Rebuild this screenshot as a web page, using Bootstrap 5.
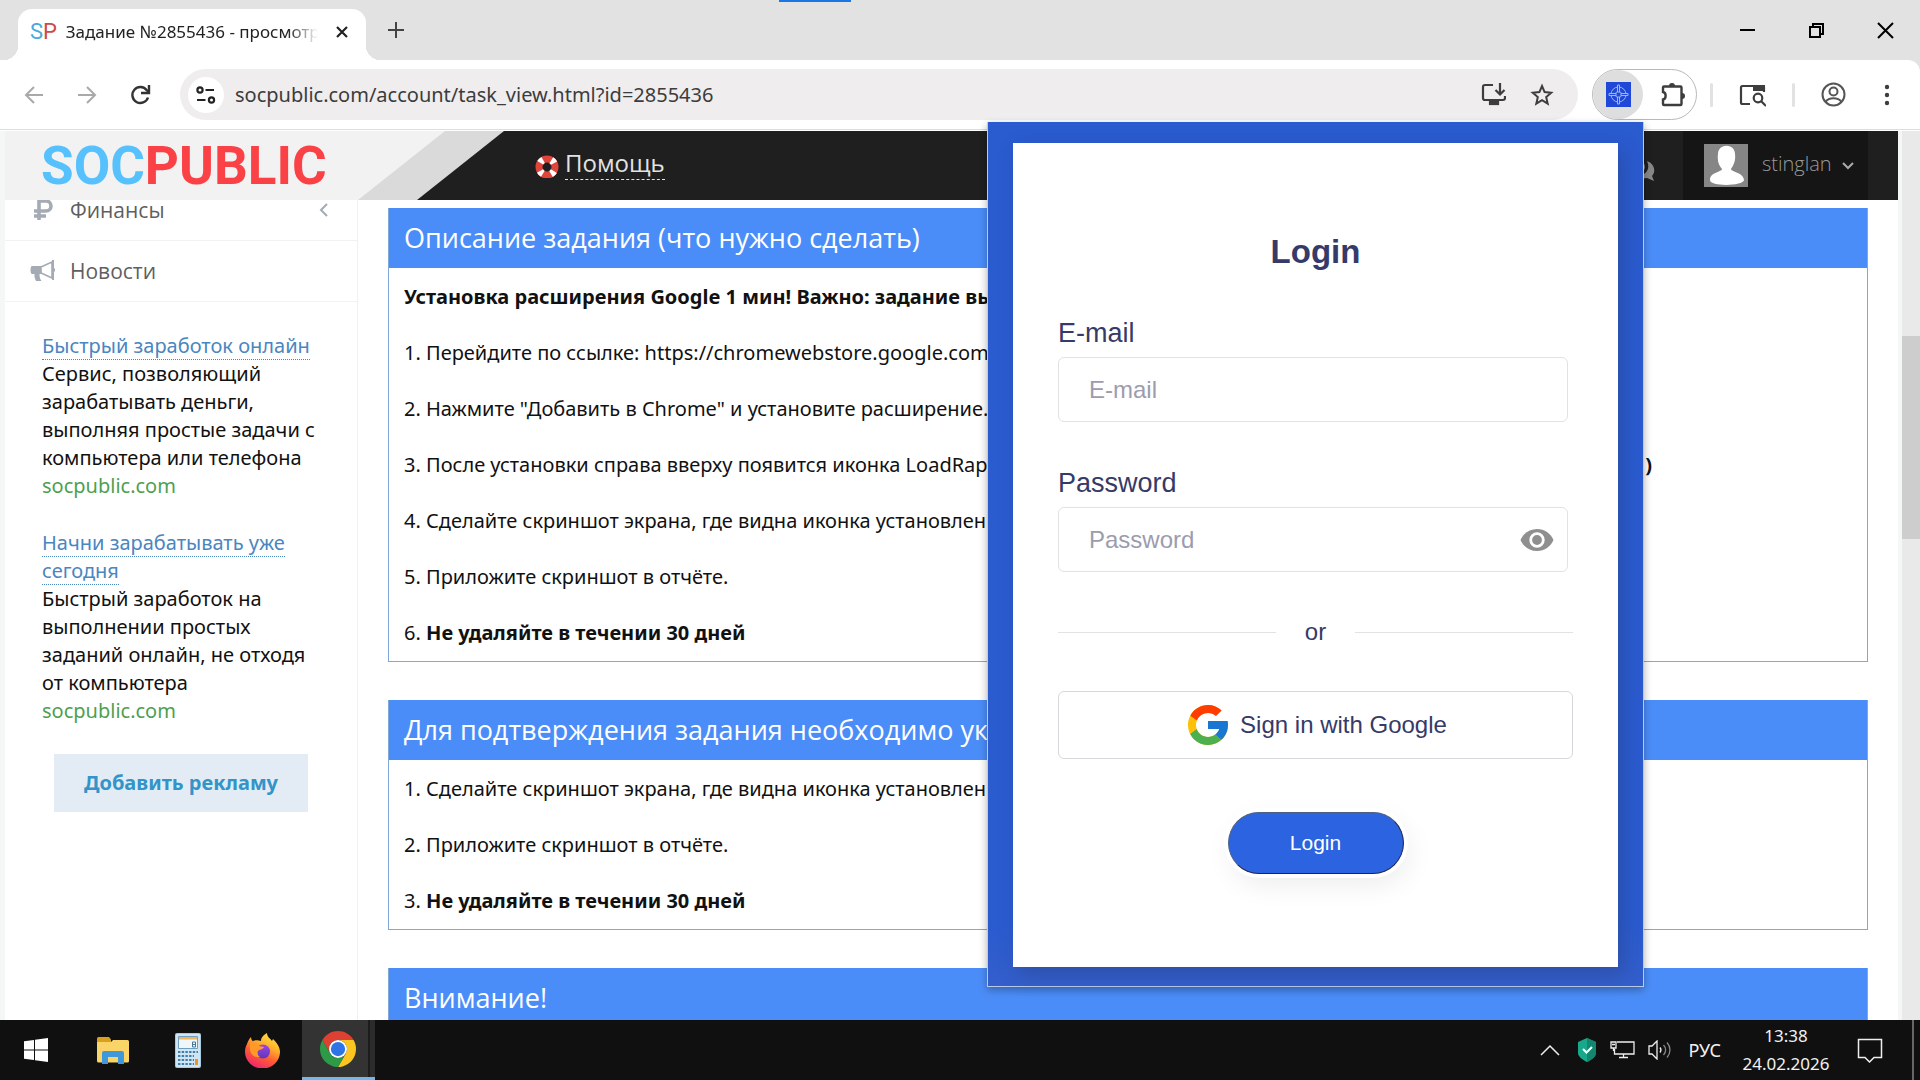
<!DOCTYPE html>
<html lang="ru">
<head>
<meta charset="utf-8">
<meta name="viewport" content="width=device-width, initial-scale=1">
<title>Задание №2855436 - просмотр</title>
<link href="https://cdn.jsdelivr.net/npm/bootstrap@5.3.0/dist/css/bootstrap.min.css" rel="stylesheet">
<style>
  body { font-family: "Open Sans", "Noto Sans", sans-serif; font-size: 20px; line-height: 28px; color: #111; background: #fff; }
  svg { display: block; flex: none; }
  .btn { --bs-btn-border-width: 0; --bs-btn-padding-x: 0; --bs-btn-padding-y: 0; --bs-btn-border-radius: 0; flex: none; }

  /* Browser window */
  .tabstrip { height: 60px; background: #e2e2e2; }
  .load-line { top: 0; left: 779px; width: 72px; height: 2px; background: #1877e0; }
  .browser-tab { width: 348px; height: 51px; margin-left: 18px; padding: 0 16px 6px 12px; background: #fff; border-radius: 14px 14px 0 0; }
  .browser-tab::before, .browser-tab::after { content: ""; position: absolute; bottom: 0; width: 14px; height: 14px; }
  .browser-tab::before { left: -14px; background: radial-gradient(circle at 0 0, #e2e2e2 14px, #fff 14px); }
  .browser-tab::after { right: -14px; background: radial-gradient(circle at 100% 0, #e2e2e2 14px, #fff 14px); }
  .fav { font: 400 22px/30px Roboto, sans-serif; color: #4aa8e0; width: 36px; }
  .fav span { color: #d04848; }
  .tab-title { font: 17px/24px "Noto Sans", sans-serif; color: #222; -webkit-mask-image: linear-gradient(90deg, #000 88%, transparent); mask-image: linear-gradient(90deg, #000 88%, transparent); }
  .window-buttons { gap: 52px; padding-right: 26px; }
  .new-tab { margin-left: 21px; }
  .toolbar { height: 70px; padding: 0 24px; border-bottom: 1px solid #ddd; background: #fff; border-top-right-radius: 12px; }
  .toolbar-wrap { background: #e2e2e2; }
  .nav-buttons { gap: 33px; margin-right: 28px; }
  .omnibox { height: 51px; border-radius: 26px; background: #efeded; padding: 0 24px 0 8px; gap: 24px; margin-right: 14px; }
  .site-info { width: 36px; height: 36px; border-radius: 50%; background: #fff; }
  .omnibox input { font: 20px/28px "Noto Sans", sans-serif; color: #3c3c3c; margin-left: -13px; }
  .ext-pill { width: 105px; height: 51px; border: 1px solid #b9b9b9; border-radius: 26px; padding-right: 10px; }
  .ext-active { width: 50px; height: 49px; border-radius: 50%; background: #dedede; }
  .tool-sep { width: 3px; height: 24px; background: #e2e2e2; border-radius: 2px; }
  .tool-right { gap: 26px; padding-left: 13px; }
  .menu-btn { margin-left: 6px; }

  /* Site */
  .viewport-area { min-height: 0; background: #f5f6f6; padding-left: 5px; margin-top: 1px; }
  .site-header { height: 69px; background: #1f1f1f; }
  .logo-zone { width: 499px; background: #f2f2f2; }
  .logo-text { left: 36px; top: 0; font: 700 53px/70px Roboto, sans-serif; color: #57c1fd; text-decoration: none; }
  .logo-text span { color: #fa4145; }
  .help-link { margin-left: 31px; gap: 6px; padding-bottom: 4px; color: #e2e2e2; font-size: 24px; line-height: 32px; text-decoration: none; }
  .help-link svg { margin-top: 4px; }
  .help-link span { border-bottom: 1px dashed #e2e2e2; }
  .chat-icon { margin: 8px 26px 0 auto; }
  .user-box { width: 185px; background: #151515; margin-right: 30px; padding-left: 21px; color: #999; }
  .user-name { font-size: 20px; line-height: 28px; font-weight: 300; padding: 0 10px 3px 14px; }
  .sidebar { width: 353px; background: #fff; border-right: 1px solid #eff1f2; }
  .side-row { height: 61px; border-bottom: 1px solid #f0f2f3; padding: 0 28px 0 25px; color: #5f5f5f; font-size: 21px; text-decoration: none; }
  .side-row:first-child { margin-top: -20px; }
  .side-row .side-icon { width: 40px; }
  .promo-list { padding: 30px 30px 0 37px; font-family: "Noto Sans", sans-serif; }
  .promo-list a { color: #4a86c0; text-decoration: none; border-bottom: 1px dotted #4a86c0; }
  .promo-list .domain { color: #4f9f50; }
  .second-promo { margin-top: 29px; }
  .ad-button { width: 254px; height: 58px; margin: 29px 0 0 12px; background: #e3ebf4; color: #3294c8; font-size: 20px; font-weight: 700; }
  .task-col { background: #fff; padding: 8px 30px 0 30px; }
  .task-panel { border: 1px solid #80a9d8; border-top: 0; margin-bottom: 38px; }
  .task-title { height: 60px; background: #4b8df8; color: #fff; padding: 0 15px; font-size: 27px; line-height: 60px; font-weight: 400; margin: 0; }
  .task-body { padding: 15px 15px 14px; font-family: "Noto Sans", sans-serif; white-space: nowrap; }
  .task-body p { margin-bottom: 28px; }
  .task-body p:last-child { margin-bottom: 0; }
  .tail { margin-right: 200px; }
  .scroll-track { width: 18px; margin-left: 4px; background: #e9e9e9; padding-top: 205px; }
  .scroll-thumb { height: 203px; background: #cdcdcd; }

  /* Extension popup */
  .popup { top: 122px; right: 276px; width: 657px; border: 1px solid #b9cbe9; border-top: 0; background: linear-gradient(#2a5bcf 93%, #345fcb); padding: 21px 25px 19px; box-shadow: 0 3px 8px rgba(0,0,0,.3); font-family: "Liberation Sans", Arial, sans-serif; color: #363a68; z-index: 5; }
  .login-card { background: #fff; padding: 90px 45px 93px; box-shadow: 6px 8px 18px rgba(40,60,120,.4); }
  .login-card h1 { font-size: 33px; line-height: 38px; font-weight: 700; margin: 0 0 47px; }
  .login-card label { font-size: 27px; line-height: 30px; margin-bottom: 9px; }
  .login-card .form-control { width: 510px; height: 65px; border: 1px solid #e2e2e4; border-radius: 6px; padding: 0 30px; font-size: 24px; color: #363a68; background: #fff; }
  .login-card .form-control::placeholder { color: #9c9cae; opacity: 1; }
  .login-field { margin-bottom: 46px; }
  .eye { right: 19px; bottom: 15px; }
  .or-row { gap: 29px; font-size: 24px; line-height: 28px; }
  .or-row hr { border-color: #e2e2e5; opacity: 1; margin: 0; }
  .google-btn { height: 68px; border: 1px solid #d8d8dc; border-radius: 6px; font-size: 24px; color: #363a68; margin-top: 45px; gap: 8px; }
  .login-btn { width: 176px; height: 62px; margin: 53px auto 0; border: 1px solid; border-color: #51607f #1b2547 #1b2547 #51607f; border-radius: 31px; background: #2b63e0; color: #fff; font-size: 21px; box-shadow: 0 0 0 4px #fff, 4px 10px 28px rgba(0,0,0,.08); }

  /* Windows taskbar */
  .taskbar { height: 60px; background: #101010; color: #f2f2f2; font: 18px/28px "Noto Sans", sans-serif; }
  .task-slot { width: 75px; height: 60px; color: #fff; }
  .task-active { width: 73px; margin-left: 2px; background: linear-gradient(90deg, #333 66px, #1c1c1c 66px, #1c1c1c 68px, #2b2b2b 68px); border-bottom: 3px solid #76b5e8; padding-right: 2px; }
  .tray { gap: 13px; }
  .clock { width: 90px; margin: 0 13px 0 3px; font-size: 17px; white-space: nowrap; }
  .show-desktop { width: 8px; height: 60px; border-left: 2px solid #666; margin-left: 16px; }
</style>
<script src="https://cdn.jsdelivr.net/npm/bootstrap@5.3.0/dist/js/bootstrap.bundle.min.js"></script>
</head>
<body class="d-flex flex-column vh-100 overflow-hidden position-relative">

<header>
  <div class="tabstrip d-flex align-items-end position-relative">
    <div class="load-line position-absolute"></div>
    <div class="browser-tab position-relative d-flex align-items-center">
      <div class="fav">S<span>P</span></div>
      <div class="tab-title flex-grow-1 text-nowrap overflow-hidden">Задание №2855436 - просмотр</div>
      <button class="btn ms-3" aria-label="Закрыть вкладку"><svg width="16" height="16" viewBox="0 0 16 16"><path d="M3 3l10 10M13 3L3 13" stroke="#222" stroke-width="2.200"/></svg></button>
    </div>
    <button class="btn new-tab align-self-center" aria-label="Новая вкладка"><svg width="18" height="18" viewBox="0 0 18 18"><path d="M1 9h16M9 1v16" stroke="#444" stroke-width="2"/></svg></button>
    <div class="window-buttons d-flex align-items-center align-self-center ms-auto">
      <button class="btn" aria-label="Свернуть"><svg width="17" height="17" viewBox="0 0 17 17"><path d="M1 8h15" stroke="#000" stroke-width="2"/></svg></button>
      <button class="btn" aria-label="Развернуть"><svg width="17" height="17" viewBox="0 0 17 17" fill="none" stroke="#000" stroke-width="2"><path d="M2 5h10v10H2zM5 5V2h10v10h-3"/></svg></button>
      <button class="btn" aria-label="Закрыть"><svg width="17" height="17" viewBox="0 0 17 17"><path d="M1 1l15 15M16 1L1 16" stroke="#000" stroke-width="2"/></svg></button>
    </div>
  </div>
  <div class="toolbar-wrap">
  <div class="toolbar d-flex align-items-center">
    <div class="nav-buttons d-flex align-items-center">
      <button class="btn" aria-label="Назад"><svg width="20" height="20" viewBox="0 0 20 20" fill="none" stroke="#a9a9a9" stroke-width="2"><path d="M19 10H2M10 2l-8 8 8 8"/></svg></button>
      <button class="btn" aria-label="Вперёд"><svg width="20" height="20" viewBox="0 0 20 20" fill="none" stroke="#a9a9a9" stroke-width="2"><path d="M1 10h17M10 2l8 8-8 8"/></svg></button>
      <button class="btn" aria-label="Обновить"><svg width="22" height="20" viewBox="0 0 22 20" fill="none" stroke="#333" stroke-width="2.400"><path d="M18 12.500a8 8 0 1 1-1.200-7.300L18.500 7"/><path d="M19 0v8h-8" /></svg></button>
    </div>
    <div class="omnibox d-flex align-items-center flex-grow-1">
      <button class="btn site-info d-flex align-items-center justify-content-center" aria-label="Сведения о сайте"><svg width="20" height="18" viewBox="0 0 20 18" fill="none" stroke="#222" stroke-width="2.200"><circle cx="4" cy="4" r="2.600"/><path d="M9.500 4H18M1 14h8.500"/><circle cx="15.500" cy="14" r="2.600"/></svg></button>
      <input class="form-control border-0 bg-transparent p-0 shadow-none flex-grow-1" type="text" aria-label="Адрес" value="socpublic.com/account/task_view.html?id=2855436">
      <button class="btn" aria-label="Установить приложение"><svg width="25" height="23" viewBox="0 0 25 23" fill="none" stroke="#3d3d3d" stroke-width="2.200"><path d="M12 2H4a2 2 0 0 0-2 2v11a2 2 0 0 0 2 2h18a2 2 0 0 0 2-2v-2"/><path d="M19 0v11M14.500 7l4.500 4.500L23.500 7"/><path d="M9 19h8v2H9z" fill="#3d3d3d"/></svg></button>
      <button class="btn" aria-label="Добавить в закладки"><svg width="24" height="24" viewBox="0 0 24 24" fill="none" stroke="#3d3d3d" stroke-width="2"><path d="M12 3l2.600 6.100 6.600.600-5 4.400 1.500 6.500L12 17.200l-5.700 3.400 1.500-6.500-5-4.400 6.600-.600z"/></svg></button>
    </div>
    <div class="ext-pill d-flex align-items-center justify-content-between">
      <button class="btn ext-active d-flex align-items-center justify-content-center" aria-label="LoadRaptor"><svg width="25" height="25" viewBox="0 0 25 25"><path fill="#1f47d8" d="M0 0h25v25H0z"/><g fill="none" stroke="#9db6f5" stroke-width="1"><circle cx="12.500" cy="12.500" r="7.500"/><circle cx="12.500" cy="12.500" r="3"/><path fill="#1f47d8" d="M11.500 3h2v7h-2zM11.500 15h2v7h-2zM3 11.500h7v2H3zM15 11.500h7v2h-7z"/></g></svg></button>
      <button class="btn" aria-label="Расширения"><svg width="26" height="26" viewBox="0 0 26 26"><path d="M3 5.500a1 1 0 0 1 1-1h16.500a1 1 0 0 1 1 1V22a1 1 0 0 1-1 1H4a1 1 0 0 1-1-1v-4.500c3.500-.500 3.500-7 0-7.500z" fill="none" stroke="#3d3d3d" stroke-width="2.400"/><path d="M9 4a3 3 0 0 1 6 0zM22 11a3 3 0 0 1 0 6z" fill="#3d3d3d"/></svg></button>
    </div>
    <div class="tool-right d-flex align-items-center">
      <span class="tool-sep"></span>
      <button class="btn" aria-label="Поиск по вкладкам"><svg width="27" height="24" viewBox="0 0 27 24" fill="none" stroke="#3d3d3d" stroke-width="2.200"><path d="M11 21H3.500A1.500 1.500 0 0 1 2 19.500v-15A1.500 1.500 0 0 1 3.500 3h20A1.500 1.500 0 0 1 25 4.500V9"/><path d="M14 2h12v6H14z" fill="#3d3d3d" stroke="none"/><circle cx="19" cy="15" r="4.300"/><path d="M22 18l5 5"/></svg></button>
      <span class="tool-sep"></span>
      <button class="btn" aria-label="Профиль"><svg width="25" height="25" viewBox="0 0 25 25" fill="none" stroke="#555" stroke-width="2"><circle cx="12.500" cy="12.500" r="11"/><circle cx="12.500" cy="9.500" r="4"/><path d="M4.500 20c3.500-5 12.500-5 16 0"/></svg></button>
      <button class="btn menu-btn" aria-label="Меню"><svg width="18" height="22" viewBox="0 0 18 22" fill="#3d3d3d"><circle cx="9" cy="3" r="2.200"/><circle cx="9" cy="11" r="2.200"/><circle cx="9" cy="19" r="2.200"/></svg></button>
    </div>
  </div>
  </div>
</header>

<div class="viewport-area d-flex flex-grow-1">
  <div class="d-flex flex-column flex-grow-1 overflow-hidden">
    <div class="site-header d-flex align-items-stretch flex-shrink-0">
      <div class="logo-zone position-relative">
        <svg class="w-100 h-100" viewBox="0 0 499 69" preserveAspectRatio="none"><path fill="#dadada" d="M440 0h59v69H353z"/><path fill="#1f1f1f" d="M499 0v69h-87z"/></svg>
        <a class="logo-text position-absolute" href="#">SOC<span>PUBLIC</span></a>
      </div>
      <a class="help-link d-flex align-items-center" href="#"><svg width="24" height="24" viewBox="0 0 24 24" fill="none" stroke-width="7"><circle cx="12" cy="13" r="8" stroke="#e0443b"/><circle cx="12" cy="13" r="8" stroke="#fff" stroke-dasharray="4 8.566" stroke-dashoffset="-4.283"/></svg><span>Помощь</span></a>
      <svg class="chat-icon align-self-center" width="34" height="24" viewBox="0 0 34 24" fill="#888"><ellipse cx="11" cy="9" rx="11" ry="8"/><path d="M24 3c8 3 9 11 5 15l2 5-7-3c-5 1-9 0-11-2 9 0 15-6 11-15z"/></svg>
      <button class="btn user-box d-flex align-items-center" type="button">
        <svg width="44" height="43" viewBox="0 0 44 43"><path fill="#868686" d="M0 0h44v43H0z"/><path fill="#fff" d="M14 10c0-11 17-11 17 0 1 7-2 12-4 15 0 3 12 3 13 11 0 6-34 7-34 0 0-8 12-8 12-11-3-3-5-8-4-15z"/></svg>
        <span class="user-name">stinglan</span>
        <svg width="12" height="12" viewBox="0 0 12 12" fill="none" stroke="#aaa" stroke-width="2"><path d="M1 3l5 5 5-5"/></svg>
      </button>
    </div>

    <div class="d-flex flex-grow-1 overflow-hidden">
      <aside class="sidebar flex-shrink-0 overflow-hidden">
        <a class="side-row d-flex align-items-center" href="#">
          <span class="side-icon ps-1"><svg width="20" height="24" viewBox="0 0 20 24" fill="none" stroke="#a5abb4" stroke-width="3.600"><path d="M5 22V3h7a4.500 4.500 0 0 1 0 10H0M0 18h12"/></svg></span>
          <span class="flex-grow-1">Финансы</span>
          <svg width="10" height="14" viewBox="0 0 10 14" fill="none" stroke="#a5abb4" stroke-width="2"><path d="M8 1L2 7l6 6"/></svg>
        </a>
        <a class="side-row d-flex align-items-center" href="#">
          <span class="side-icon"><svg width="25" height="22" viewBox="0 0 25 22" fill="#a5abb4"><path d="M2 6h9v8H9.500c0 3 .500 5 2 7H6C5 19 4 16 4.500 14H2C0 14 0 6 2 6z"/><path d="M11 7l11-5v16l-11-5z" fill="none" stroke="#a5abb4" stroke-width="1.600"/><path d="M22 0h2v20h-2zM24 8c1.500 1 1.500 3 0 4z"/></svg></span>
          <span>Новости</span>
        </a>
        <div class="promo-list">
          <div><a href="#">Быстрый заработок онлайн</a></div>
          <div>Сервис, позволяющий<br>зарабатывать деньги,<br>выполняя простые задачи с<br>компьютера или телефона</div>
          <div class="domain">socpublic.com</div>
          <div class="second-promo"><a href="#">Начни зарабатывать уже<br>сегодня</a></div>
          <div>Быстрый заработок на<br>выполнении простых<br>заданий онлайн, не отходя<br>от компьютера</div>
          <div class="domain">socpublic.com</div>
          <button class="btn ad-button" type="button">Добавить рекламу</button>
        </div>
      </aside>

      <main class="task-col flex-grow-1 overflow-hidden">
        <section class="task-panel">
          <h2 class="task-title">Описание задания (что нужно сделать)</h2>
          <div class="task-body">
            <p><b>Установка расширения Google 1 мин! Важно: задание выполнять</b></p>
            <p>1. Перейдите по ссылке: https://chromewebstore.google.com/detail</p>
            <p>2. Нажмите "Добавить в Chrome" и установите расширение.</p>
            <p class="d-flex justify-content-between"><span>3. После установки справа вверху появится иконка LoadRaptor</span><b class="tail">)</b></p>
            <p>4. Сделайте скриншот экрана, где видна иконка установленного</p>
            <p>5. Приложите скриншот в отчёте.</p>
            <p>6. <b>Не удаляйте в течении 30 дней</b></p>
          </div>
        </section>
        <section class="task-panel">
          <h2 class="task-title">Для подтверждения задания необходимо указать</h2>
          <div class="task-body">
            <p>1. Сделайте скриншот экрана, где видна иконка установленного</p>
            <p>2. Приложите скриншот в отчёте.</p>
            <p>3. <b>Не удаляйте в течении 30 дней</b></p>
          </div>
        </section>
        <section class="task-panel">
          <h2 class="task-title">Внимание!</h2>
        </section>
      </main>
    </div>
  </div>
  <div class="scroll-track flex-shrink-0"><div class="scroll-thumb"></div></div>
</div>

<div class="popup position-absolute">
  <form class="login-card">
    <h1 class="text-center">Login</h1>
    <div class="login-field">
      <label class="d-block" for="email">E-mail</label>
      <input class="form-control" id="email" type="email" placeholder="E-mail">
    </div>
    <div class="login-field position-relative">
      <label class="d-block" for="password">Password</label>
      <input class="form-control" id="password" type="password" placeholder="Password">
      <button class="btn eye position-absolute" type="button" aria-label="Показать пароль"><svg width="34" height="34" viewBox="0 0 34 34"><path fill="#8f8f8f" d="M17 6C9.500 6 3.200 10.500.500 17c2.700 6.500 9 11 16.500 11s13.800-4.500 16.500-11C30.800 10.500 24.500 6 17 6z"/><circle cx="17" cy="17" r="6.300" fill="#8f8f8f" stroke="#fff" stroke-width="2.800"/></svg></button>
    </div>
    <div class="or-row d-flex align-items-center"><hr class="flex-grow-1"><span>or</span><hr class="flex-grow-1"></div>
    <button class="btn google-btn w-100 d-flex align-items-center justify-content-center" type="button">
      <svg width="48" height="48" viewBox="0 0 48 48"><path fill="#FFC107" d="M43.611 20.083H42V20H24v8h11.303c-1.649 4.657-6.080 8-11.303 8-6.627 0-12-5.373-12-12s5.373-12 12-12c3.059 0 5.842 1.154 7.961 3.039l5.657-5.657C34.046 6.053 29.268 4 24 4 12.955 4 4 12.955 4 24s8.955 20 20 20 20-8.955 20-20c0-1.341-.138-2.650-.389-3.917z"/><path fill="#FF3D00" d="M6.306 14.691l6.571 4.819C14.655 15.108 18.961 12 24 12c3.059 0 5.842 1.154 7.961 3.039l5.657-5.657C34.046 6.053 29.268 4 24 4 16.318 4 9.656 8.337 6.306 14.691z"/><path fill="#4CAF50" d="M24 44c5.166 0 9.860-1.977 13.409-5.192l-6.190-5.238C29.211 35.091 26.715 36 24 36c-5.202 0-9.619-3.317-11.283-7.946l-6.522 5.025C9.505 39.556 16.227 44 24 44z"/><path fill="#1976D2" d="M43.611 20.083H42V20H24v8h11.303c-.792 2.237-2.231 4.166-4.087 5.571l6.193 5.237C36.971 39.205 44 34 44 24c0-1.341-.138-2.650-.389-3.917z"/></svg>
      <span>Sign in with Google</span>
    </button>
    <button class="btn login-btn d-block" type="submit">Login</button>
  </form>
</div>

<footer class="taskbar d-flex align-items-center flex-shrink-0">
  <button class="btn task-slot d-flex align-items-center justify-content-center pe-1" aria-label="Пуск"><svg width="24" height="24" viewBox="0 0 24 24" fill="#fff"><path d="M0 3.300L10 2v9.400H0zM11 1.800L24 0v11.400H11zM0 12.600h10V22L0 20.700zM11 12.600h13V24l-13-1.800z"/></svg></button>
  <button class="btn task-slot d-flex align-items-center justify-content-center" aria-label="Проводник"><svg width="32" height="27" viewBox="0 0 32 27"><path fill="#d8a01c" d="M0 1.500Q0 0 1.500 0H12l2 2.500V6H0z"/><path fill="#fbd468" d="M0 5h14l2-2h14.500Q32 3 32 4.500V24q0 1.500-1.500 1.500h-29Q0 25.500 0 24z"/><path fill="#3e98d9" d="M5 27V16q0-2 2-2h18q2 0 2 2v11h-6v-7H11v7z"/></svg></button>
  <button class="btn task-slot d-flex align-items-center justify-content-center" aria-label="Калькулятор"><svg width="26" height="35" viewBox="0 0 26 35"><rect width="26" height="35" rx="2" fill="#a9cbe0"/><rect x="1" y="1" width="24" height="33" rx="1" fill="#cfe5f2"/><path fill="#f0f7fb" stroke="#6f9fc0" d="M3.500 3.500h19v12h-19z"/><path fill="#f0b45c" d="M4 4h18v2.500H4z"/><path d="M17.500 9h3v5h-3zM17.500 11.500h3" fill="none" stroke="#47769a"/><path stroke="#3f7fae" stroke-width="2" stroke-dasharray="2.400 1.300" d="M3 19h20M3 23h16M3 27h16M3 31h16"/><path fill="#e8962c" d="M20 26h3v6h-3z"/></svg></button>
  <button class="btn task-slot d-flex align-items-center justify-content-center" aria-label="Firefox"><svg width="35" height="35" viewBox="0 0 35 35"><defs><linearGradient id="fxBody" x1=".8" y1="0" x2=".3" y2="1"><stop offset="0" stop-color="#ffe545"/><stop offset=".35" stop-color="#ffb02c"/><stop offset=".65" stop-color="#ff5a35"/><stop offset="1" stop-color="#ee2470"/></linearGradient><linearGradient id="fxCore" x1="0" y1="0" x2="0" y2="1"><stop offset="0" stop-color="#a142e8"/><stop offset="1" stop-color="#5a38b8"/></linearGradient></defs><path fill="url(#fxBody)" d="M2 11c1-3 2-5 4-7 0 2 1 4 2 4 3-1 5-1 8 0 0-4 3-6 6-8 0 4 3 5 5 8l1-2c4 4 7 8 7 13a17 16 0 0 1-35 0c0-4 1-6 2-8z"/><circle cx="18" cy="18.500" r="7" fill="url(#fxCore)"/><path fill="#ff9a28" d="M5 10c4-1 7 0 9 3l5 1c-1 3-5 2-6 4-1 2 0 5 2 6-6 1-10-3-10-9z"/></svg></button>
  <button class="btn task-slot task-active d-flex align-items-center justify-content-center" aria-label="Chrome"><svg width="36" height="36" viewBox="0 0 48 48"><path fill="#de4032" d="M24 12h20.780A24 24 0 0 0 3.220 12L13.600 30A12 12 0 0 1 24 12z"/><path fill="#fcc41f" transform="rotate(120 24 24)" d="M24 12h20.780A24 24 0 0 0 3.220 12L13.600 30A12 12 0 0 1 24 12z"/><path fill="#2d9a48" transform="rotate(240 24 24)" d="M24 12h20.780A24 24 0 0 0 3.220 12L13.600 30A12 12 0 0 1 24 12z"/><circle cx="24" cy="24" r="12" fill="#fff"/><circle cx="24" cy="24" r="9.500" fill="#2f74e4"/></svg></button>
  <div class="tray d-flex align-items-center ms-auto">
    <svg class="me-1" width="20" height="12" viewBox="0 0 20 12" fill="none" stroke="#eee" stroke-width="1.500"><path d="M1 11l9-9 9 9"/></svg>
    <svg width="20" height="24" viewBox="0 0 20 24"><path fill="#1aa88a" d="M10 0l9 4v11c0 4-5 7-9 9-4-2-9-5-9-9V4z"/><path fill="#12866e" d="M10 0l9 4v11c0 4-5 7-9 9z"/><path d="M6 11l3.500 3.500L15 9" fill="none" stroke="#fff" stroke-width="2"/></svg>
    <svg width="25" height="20" viewBox="0 0 25 20" fill="none" stroke="#eee" stroke-width="1.300"><path d="M7 2h17v12H4.500V9M1 2h5v6H1zM3.500 8v3M2 4.500h3M9 17.500h9M13.500 14v3.500"/></svg>
    <svg width="24" height="20" viewBox="0 0 24 20" fill="none" stroke="#eee" stroke-width="1.300"><path d="M1 6h3l5-5v18l-5-5H1z"/><path d="M12 7.500a4 4 0 0 1 0 5"/><path stroke="#888" d="M15.500 5a7 7 0 0 1 0 10M19 2.500a11 11 0 0 1 0 15"/></svg>
    <span class="mx-1">РУС</span>
    <div class="clock text-center">13:38<br>24.02.2026</div>
    <svg width="26" height="25" viewBox="0 0 26 25" fill="none" stroke="#eee" stroke-width="1.500"><path d="M1.500 1.500h23v18H17L12.500 24 8 19.500H1.500z"/></svg>
    <div class="show-desktop"></div>
  </div>
</footer>

</body>
</html>
